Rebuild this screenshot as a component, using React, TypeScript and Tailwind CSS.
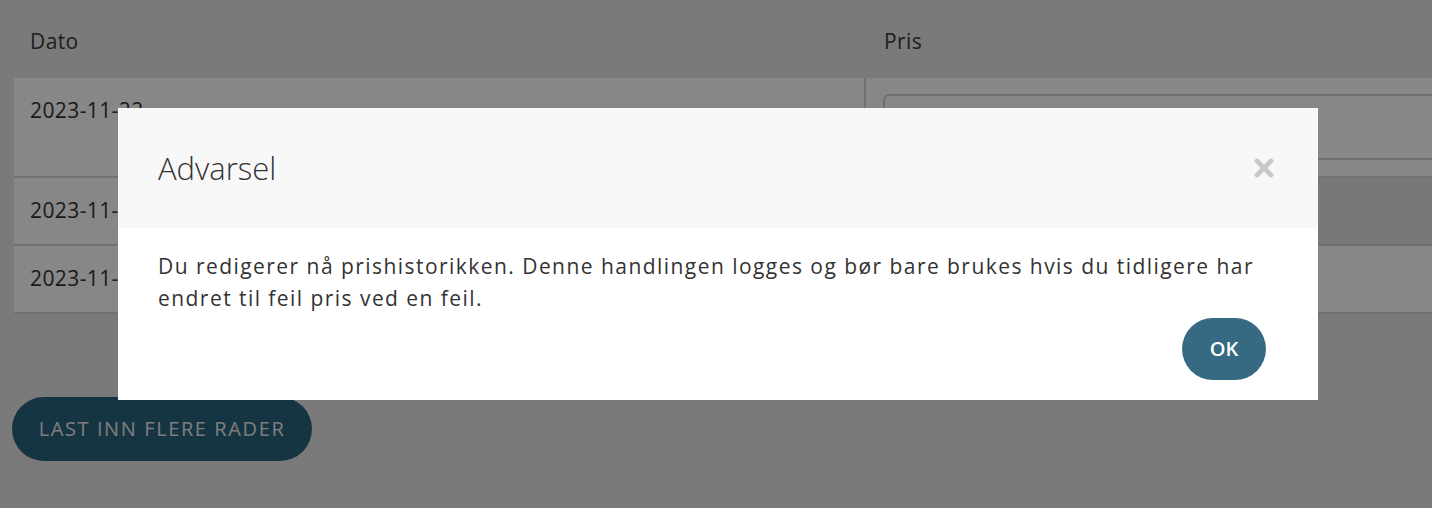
import { X } from 'lucide-react';

const rows = [
  { id: 1, date: '2023-11-22', editing: true },
  { id: 2, date: '2023-11-15', editing: false },
  { id: 3, date: '2023-11-08', editing: false },
];

export default function App() {
  return (
    <div className="relative h-[508px] w-full overflow-hidden bg-[#e6e6e6] font-['Open_Sans',sans-serif] text-[#333]">
      <PriceHistory />
      <WarningModal />
    </div>
  );
}

function PriceHistory() {
  return (
    <div className="pl-[14px]">
      <div className="w-[1480px]">
        <div className="flex h-[78px] items-center pt-[5px] text-[21px] tracking-[0.4px] text-[#3a3a3a]">
          <div className="w-[853px] pl-4">Dato</div>
          <div className="flex-1 pl-[17px]">Pris</div>
        </div>
        {rows.map((row) =>
          row.editing ? (
            <div key={row.id} className="flex h-[100px] border-b-2 border-[#d6d6d6] bg-white text-[21px] tracking-[0.4px]">
              <div className="w-[852px] border-r-2 border-[#d6d6d6] px-4 pt-[17px]">{row.date}</div>
              <div className="flex-1 pl-[17px] pt-[16px]">
                <div className="h-[66px] w-full rounded-[6px] border-2 border-[#d3d3d3] bg-white" />
              </div>
            </div>
          ) : (
            <div
              key={row.id}
              className="flex h-[68px] border-b-2 border-[#d6d6d6] bg-white text-[21px] tracking-[0.4px] last:h-[66px] last:border-b-0"
            >
              <div className="flex w-[852px] items-center px-4">{row.date}</div>
              <div className={row.id === 2 ? 'flex-1 bg-[#e2e2e2]' : 'flex-1'} />
            </div>
          ),
        )}
        <div className="h-[83px]" />
      </div>
      <button
        type="button"
        className="-ml-[2px] h-[64px] w-[300px] rounded-full bg-[#2b647e] text-[20px] font-medium tracking-[1.6px] text-[#ececec]"
      >
        LAST INN FLERE RADER
      </button>
    </div>
  );
}

function WarningModal() {
  return (
    <div className="absolute inset-0 bg-black/[0.47]">
      <div className="ml-[118px] mt-[108px] w-[1200px] bg-white">
        <div className="flex h-[120px] items-center justify-between bg-[#f8f8f8] pl-[40px] pr-[40px]">
          <h2 className="text-[31px] font-light text-[#333]">Advarsel</h2>
          <X className="h-[28px] w-[28px] text-[#c8c8c8]" strokeWidth={4} />
        </div>
        <div className="px-[40px] pt-[22px] pb-[20px]">
          <p className="text-[21px] leading-[32px] tracking-[1.45px] text-[#333]">
            Du redigerer nå prishistorikken. Denne handlingen logges og bør bare brukes hvis du tidligere har
            endret til feil pris ved en feil.
          </p>
          <div className="mt-[4px] flex justify-end pr-[12px]">
            <button
              type="button"
              className="h-[62px] w-[84px] rounded-full bg-[#356a82] text-[20px] font-semibold text-white"
            >
              OK
            </button>
          </div>
        </div>
      </div>
    </div>
  );
}
